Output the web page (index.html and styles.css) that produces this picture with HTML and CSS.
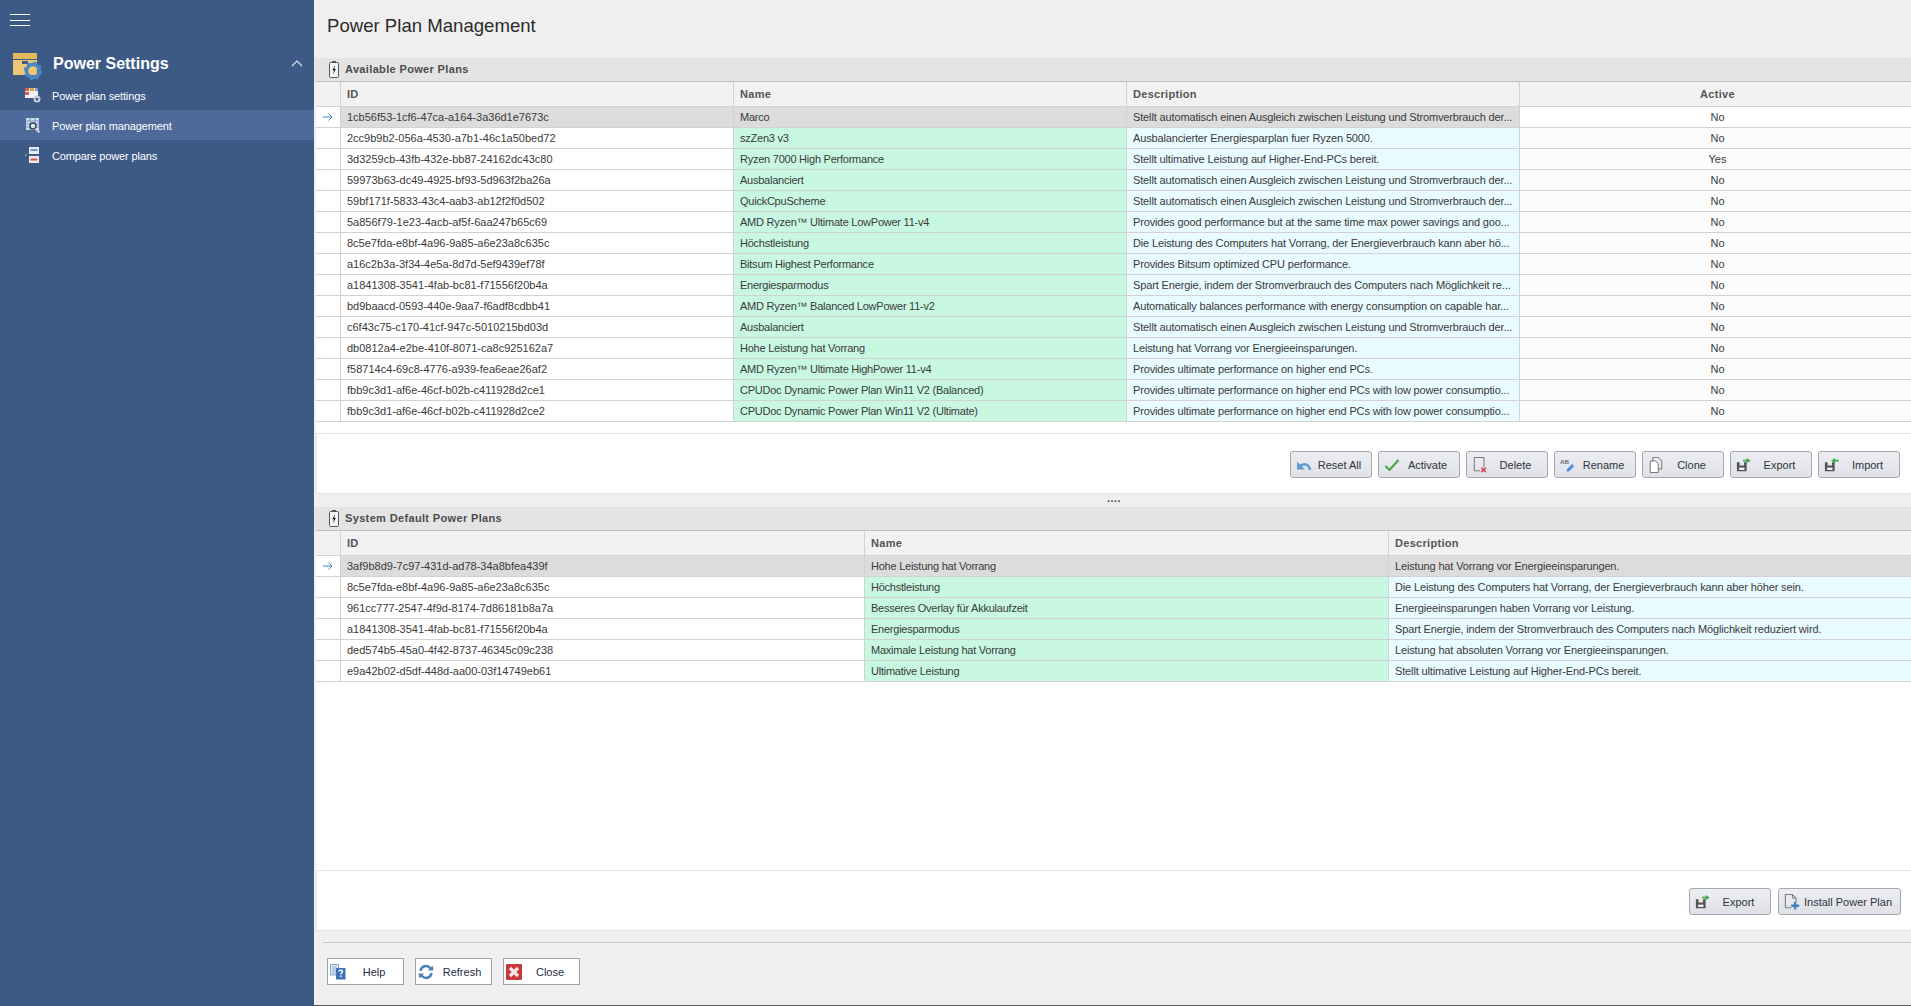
FILE: index.html
```html
<!DOCTYPE html>
<html lang="en">
<head>
<meta charset="utf-8">
<title>Power Plan Management</title>
<link rel="stylesheet" href="styles.css">
</head>
<body>
<svg class="defs" width="0" height="0" aria-hidden="true">
  <symbol id="i-battery" viewBox="0 0 10 17">
    <rect x="3" y="0" width="4" height="2" fill="#555"/>
    <rect x="0.5" y="1.5" width="9" height="15" rx="1" fill="#f4f4f4" stroke="#555"/>
    <path d="M6 4 3.4 9.2H5L4 13.6 6.8 8H5.2Z" fill="#111"/>
  </symbol>
  <symbol id="i-arrow" viewBox="0 0 10 8">
    <path d="M0 4H9M5.5 .5 9 4 5.5 7.5" fill="none" stroke="#3f86e0"/>
  </symbol>
  <symbol id="i-reset" viewBox="0 0 16 16">
    <path d="M14 13C13.500 8 9 5.500 4.500 8.500" fill="none" stroke="#5b9bd8" stroke-width="2.400"/>
    <path d="M1 4.500V12.500H9Z" fill="#5b9bd8"/>
  </symbol>
  <symbol id="i-check" viewBox="0 0 16 16">
    <path d="M1.500 9 5.500 13 14.500 3" fill="none" stroke="#4ba553" stroke-width="2.200"/>
  </symbol>
  <symbol id="i-delete" viewBox="0 0 16 18">
    <path d="M8 15.500H1.500V.5H12.500V11" fill="none" stroke="#666"/>
    <path d="M9.500 12 14.500 17M14.500 12 9.500 17" stroke="#e0405a" stroke-width="1.800"/>
  </symbol>
  <symbol id="i-clone" viewBox="0 0 16 18">
    <path d="M4.500 4.500V.5H10.500L14.500 4.500V13.500H10.500" fill="none" stroke="#666"/>
    <path d="M1.500 4.500H7.500L10.500 7.500V17.500H1.500Z" fill="#fff" stroke="#666"/>
  </symbol>
  <symbol id="i-export" viewBox="0 0 18 16">
    <path d="M1 5H4V8.500H9V5H12V15H1Z" fill="#555"/>
    <rect x="3.500" y="11" width="6" height="2.500" fill="#fff"/>
    <path d="M8 2H12V0L16.500 3 12 6V4H8Z" fill="#3ea84b"/>
  </symbol>
  <symbol id="i-import" viewBox="0 0 18 16">
    <path d="M1 5H4V8.500H9V5H12V15H1Z" fill="#555"/>
    <rect x="3.500" y="11" width="6" height="2.500" fill="#fff"/>
    <path d="M16.500 2H12.500V0L8 3 12.500 6V4H16.500Z" fill="#3ea84b"/>
  </symbol>
  <symbol id="i-install" viewBox="0 0 18 18">
    <path d="M8 15.500H1.500V.5H9.500L13.500 4.500V9" fill="none" stroke="#666"/>
    <path d="M9.500 .5V4.500H13.500" fill="none" stroke="#666"/>
    <path d="M12.500 9V17.500M8 13.200H17" stroke="#3f7fc0" stroke-width="2.600"/>
  </symbol>
  <symbol id="i-help" viewBox="0 0 16 16">
    <path d="M.5.5H8.500V11H.5Z" fill="#e6edf6" stroke="#7f9fc8"/>
    <path d="M2 3H7M2 5H7M2 7H7M2 9H7" stroke="#8aa8d0"/>
    <rect x="6" y="4" width="9.500" height="11.500" fill="#3f72b8"/>
    <path d="M8.800 7.500C9 5.800 12.500 5.800 12.500 7.500 12.500 9 10.800 8.800 10.800 10.500" fill="none" stroke="#fff" stroke-width="1.300"/>
    <rect x="10.200" y="11.500" width="1.400" height="1.500" fill="#fff"/>
  </symbol>
  <symbol id="i-refresh" viewBox="0 0 16 16">
    <path d="M2.500 7A5.500 5.500 0 0 1 12.500 4.500" fill="none" stroke="#4a80bd" stroke-width="2.400"/>
    <path d="M15.500 6.500H10L14.500 1.500Z" fill="#4a80bd"/>
    <path d="M13.500 9A5.500 5.500 0 0 1 3.500 11.500" fill="none" stroke="#4a80bd" stroke-width="2.400"/>
    <path d="M.5 9.500H6L1.500 14.500Z" fill="#4a80bd"/>
  </symbol>
  <symbol id="i-close" viewBox="0 0 14 14">
    <rect width="14" height="14" rx="1" fill="#c8383c"/>
    <path d="M3.500 3.500 10.500 10.500M10.500 3.500 3.500 10.500" stroke="#f4e8e8" stroke-width="2.800"/>
  </symbol>
  <symbol id="i-power" viewBox="0 0 29 28">
    <rect x="0" y="0" width="24" height="6" fill="#e7b95e"/>
    <rect x="0" y="7" width="24" height="15" fill="#eec675"/>
    <rect x="9" y="8" width="6" height="3" fill="#3d5a87"/>
    <circle cx="20" cy="18" r="6.500" fill="none" stroke="#4a86c5" stroke-width="3.500"/>
    <circle cx="20" cy="18" r="8" fill="none" stroke="#4a86c5" stroke-width="2.500" stroke-dasharray="3 3.300"/>
  </symbol>
  <symbol id="i-settings" viewBox="0 0 16 16">
    <rect x="0" y="1" width="13" height="10" fill="#f3f3f3"/>
    <rect x="0" y="1" width="4" height="3" fill="#d8584d"/>
    <rect x="5" y="1" width="4" height="3" fill="#e0a030"/>
    <rect x="0" y="5" width="4" height="3" fill="#d8584d"/>
    <rect x="10" y="1" width="3" height="3" fill="#7d9cc8"/>
    <circle cx="12" cy="12" r="2.500" fill="none" stroke="#c9ced6" stroke-width="2"/>
  </symbol>
  <symbol id="i-manage" viewBox="0 0 16 16">
    <rect x="1" y="1" width="13" height="12" fill="#cfdcf0"/>
    <path d="M1 4H14M1 7H14M1 10H14M5 1V13M10 1V13" stroke="#7d9cc8"/>
    <circle cx="8" cy="9" r="3" fill="#dfe7f3" stroke="#39404e" stroke-width="1.400"/>
    <path d="M10.500 11.500 14.500 15.500" stroke="#cdd6e2" stroke-width="2"/>
  </symbol>
  <symbol id="i-compare" viewBox="0 0 16 16">
    <path d="M0 6.500 2 8 0 9.500Z" fill="#7cc04a"/>
    <rect x="4" y="0" width="10" height="7" fill="#e8eef7"/>
    <rect x="5.500" y="2" width="7" height="2" fill="#6f96cf"/>
    <rect x="4" y="9" width="10" height="7" fill="#f2e8e8"/>
    <rect x="5.500" y="11.500" width="7" height="2" fill="#cf5c5c"/>
  </symbol>
</svg>

<div class="app">
  <aside class="sidebar">
    <button class="menu-btn" aria-label="Menu"><span></span><span></span><span></span></button>
    <div class="group-head">
      <svg class="group-icon"><use href="#i-power"/></svg>
      <span class="group-title">Power Settings</span>
      <svg class="chevron" viewBox="0 0 12 7"><path d="M1 6 6 1 11 6" fill="none" stroke="#dfe6f0" stroke-width="1.200"/></svg>
    </div>
    <nav class="nav">
      <a class="nav-item"><svg class="nav-icon"><use href="#i-settings"/></svg>Power plan settings</a>
      <a class="nav-item nav-item-active"><svg class="nav-icon"><use href="#i-manage"/></svg>Power plan management</a>
      <a class="nav-item"><svg class="nav-icon"><use href="#i-compare"/></svg>Compare power plans</a>
    </nav>
  </aside>

  <main class="main">
    <h1 class="page-title">Power Plan Management</h1>

    <section class="section">
      <div class="section-head"><svg class="section-icon"><use href="#i-battery"/></svg>Available Power Plans</div>
      <div class="body">
        <div class="grid grid-four">
          <div class="row row-head"><div class="cell cell-ind"></div><div class="cell">ID</div><div class="cell">Name</div><div class="cell">Description</div><div class="cell cell-center">Active</div></div>
          <div class="row row-sel"><div class="cell cell-ind"><svg class="ind-arrow"><use href="#i-arrow"/></svg></div><div class="cell">1cb56f53-1cf6-47ca-a164-3a36d1e7673c</div><div class="cell">Marco</div><div class="cell">Stellt automatisch einen Ausgleich zwischen Leistung und Stromverbrauch der...</div><div class="cell cell-active">No</div></div>
          <div class="row"><div class="cell cell-ind"></div><div class="cell">2cc9b9b2-056a-4530-a7b1-46c1a50bed72</div><div class="cell cell-name">szZen3 v3</div><div class="cell cell-desc">Ausbalancierter Energiesparplan fuer Ryzen 5000.</div><div class="cell cell-active">No</div></div>
          <div class="row"><div class="cell cell-ind"></div><div class="cell">3d3259cb-43fb-432e-bb87-24162dc43c80</div><div class="cell cell-name">Ryzen 7000 High Performance</div><div class="cell cell-desc">Stellt ultimative Leistung auf Higher-End-PCs bereit.</div><div class="cell cell-active">Yes</div></div>
          <div class="row"><div class="cell cell-ind"></div><div class="cell">59973b63-dc49-4925-bf93-5d963f2ba26a</div><div class="cell cell-name">Ausbalanciert</div><div class="cell cell-desc">Stellt automatisch einen Ausgleich zwischen Leistung und Stromverbrauch der...</div><div class="cell cell-active">No</div></div>
          <div class="row"><div class="cell cell-ind"></div><div class="cell">59bf171f-5833-43c4-aab3-ab12f2f0d502</div><div class="cell cell-name">QuickCpuScheme</div><div class="cell cell-desc">Stellt automatisch einen Ausgleich zwischen Leistung und Stromverbrauch der...</div><div class="cell cell-active">No</div></div>
          <div class="row"><div class="cell cell-ind"></div><div class="cell">5a856f79-1e23-4acb-af5f-6aa247b65c69</div><div class="cell cell-name">AMD Ryzen™ Ultimate LowPower 11-v4</div><div class="cell cell-desc">Provides good performance but at the same time max power savings and goo...</div><div class="cell cell-active">No</div></div>
          <div class="row"><div class="cell cell-ind"></div><div class="cell">8c5e7fda-e8bf-4a96-9a85-a6e23a8c635c</div><div class="cell cell-name">Höchstleistung</div><div class="cell cell-desc">Die Leistung des Computers hat Vorrang, der Energieverbrauch kann aber hö...</div><div class="cell cell-active">No</div></div>
          <div class="row"><div class="cell cell-ind"></div><div class="cell">a16c2b3a-3f34-4e5a-8d7d-5ef9439ef78f</div><div class="cell cell-name">Bitsum Highest Performance</div><div class="cell cell-desc">Provides Bitsum optimized CPU performance.</div><div class="cell cell-active">No</div></div>
          <div class="row"><div class="cell cell-ind"></div><div class="cell">a1841308-3541-4fab-bc81-f71556f20b4a</div><div class="cell cell-name">Energiesparmodus</div><div class="cell cell-desc">Spart Energie, indem der Stromverbrauch des Computers nach Möglichkeit re...</div><div class="cell cell-active">No</div></div>
          <div class="row"><div class="cell cell-ind"></div><div class="cell">bd9baacd-0593-440e-9aa7-f6adf8cdbb41</div><div class="cell cell-name">AMD Ryzen™ Balanced LowPower 11-v2</div><div class="cell cell-desc">Automatically balances performance with energy consumption on capable har...</div><div class="cell cell-active">No</div></div>
          <div class="row"><div class="cell cell-ind"></div><div class="cell">c6f43c75-c170-41cf-947c-5010215bd03d</div><div class="cell cell-name">Ausbalanciert</div><div class="cell cell-desc">Stellt automatisch einen Ausgleich zwischen Leistung und Stromverbrauch der...</div><div class="cell cell-active">No</div></div>
          <div class="row"><div class="cell cell-ind"></div><div class="cell">db0812a4-e2be-410f-8071-ca8c925162a7</div><div class="cell cell-name">Hohe Leistung hat Vorrang</div><div class="cell cell-desc">Leistung hat Vorrang vor Energieeinsparungen.</div><div class="cell cell-active">No</div></div>
          <div class="row"><div class="cell cell-ind"></div><div class="cell">f58714c4-69c8-4776-a939-fea6eae26af2</div><div class="cell cell-name">AMD Ryzen™ Ultimate HighPower 11-v4</div><div class="cell cell-desc">Provides ultimate performance on higher end PCs.</div><div class="cell cell-active">No</div></div>
          <div class="row"><div class="cell cell-ind"></div><div class="cell">fbb9c3d1-af6e-46cf-b02b-c411928d2ce1</div><div class="cell cell-name">CPUDoc Dynamic Power Plan Win11 V2 (Balanced)</div><div class="cell cell-desc">Provides ultimate performance on higher end PCs with low power consumptio...</div><div class="cell cell-active">No</div></div>
          <div class="row"><div class="cell cell-ind"></div><div class="cell">fbb9c3d1-af6e-46cf-b02b-c411928d2ce2</div><div class="cell cell-name">CPUDoc Dynamic Power Plan Win11 V2 (Ultimate)</div><div class="cell cell-desc">Provides ultimate performance on higher end PCs with low power consumptio...</div><div class="cell cell-active">No</div></div>
        </div>
        <div class="actions actions-top">
          <button class="btn"><svg class="btn-icon"><use href="#i-reset"/></svg><span>Reset All</span></button>
          <button class="btn"><svg class="btn-icon"><use href="#i-check"/></svg><span>Activate</span></button>
          <button class="btn"><svg class="btn-icon"><use href="#i-delete"/></svg><span>Delete</span></button>
          <button class="btn"><svg class="btn-icon" viewBox="0 0 18 16"><text x="0" y="6.500" class="icon-letters">AB</text><path d="M7.500 15.500 8 12.500 13.500 7 16 9.500 10.500 15Z" fill="#4f8fdc"/></svg><span>Rename</span></button>
          <button class="btn"><svg class="btn-icon"><use href="#i-clone"/></svg><span>Clone</span></button>
          <button class="btn"><svg class="btn-icon"><use href="#i-export"/></svg><span>Export</span></button>
          <button class="btn"><svg class="btn-icon"><use href="#i-import"/></svg><span>Import</span></button>
        </div>
      </div>
    </section>

    <div class="splitter">....</div>

    <section class="section section-fill">
      <div class="section-head"><svg class="section-icon"><use href="#i-battery"/></svg>System Default Power Plans</div>
      <div class="body body-fill">
        <div class="grid grid-three">
          <div class="row row-head"><div class="cell cell-ind"></div><div class="cell">ID</div><div class="cell">Name</div><div class="cell">Description</div></div>
          <div class="row row-sel"><div class="cell cell-ind"><svg class="ind-arrow"><use href="#i-arrow"/></svg></div><div class="cell">3af9b8d9-7c97-431d-ad78-34a8bfea439f</div><div class="cell">Hohe Leistung hat Vorrang</div><div class="cell">Leistung hat Vorrang vor Energieeinsparungen.</div></div>
          <div class="row"><div class="cell cell-ind"></div><div class="cell">8c5e7fda-e8bf-4a96-9a85-a6e23a8c635c</div><div class="cell cell-name">Höchstleistung</div><div class="cell cell-desc">Die Leistung des Computers hat Vorrang, der Energieverbrauch kann aber höher sein.</div></div>
          <div class="row"><div class="cell cell-ind"></div><div class="cell">961cc777-2547-4f9d-8174-7d86181b8a7a</div><div class="cell cell-name">Besseres Overlay für Akkulaufzeit</div><div class="cell cell-desc">Energieeinsparungen haben Vorrang vor Leistung.</div></div>
          <div class="row"><div class="cell cell-ind"></div><div class="cell">a1841308-3541-4fab-bc81-f71556f20b4a</div><div class="cell cell-name">Energiesparmodus</div><div class="cell cell-desc">Spart Energie, indem der Stromverbrauch des Computers nach Möglichkeit reduziert wird.</div></div>
          <div class="row"><div class="cell cell-ind"></div><div class="cell">ded574b5-45a0-4f42-8737-46345c09c238</div><div class="cell cell-name">Maximale Leistung hat Vorrang</div><div class="cell cell-desc">Leistung hat absoluten Vorrang vor Energieeinsparungen.</div></div>
          <div class="row"><div class="cell cell-ind"></div><div class="cell">e9a42b02-d5df-448d-aa00-03f14749eb61</div><div class="cell cell-name">Ultimative Leistung</div><div class="cell cell-desc">Stellt ultimative Leistung auf Higher-End-PCs bereit.</div></div>
        </div>
        <div class="actions actions-bottom">
          <button class="btn"><svg class="btn-icon"><use href="#i-export"/></svg><span>Export</span></button>
          <button class="btn btn-wide"><svg class="btn-icon"><use href="#i-install"/></svg><span>Install Power Plan</span></button>
        </div>
      </div>
    </section>

    <footer class="footer">
      <button class="foot-btn"><svg class="foot-icon"><use href="#i-help"/></svg><span>Help</span></button>
      <button class="foot-btn"><svg class="foot-icon"><use href="#i-refresh"/></svg><span>Refresh</span></button>
      <button class="foot-btn"><svg class="foot-icon"><use href="#i-close"/></svg><span>Close</span></button>
    </footer>
  </main>
</div>
</body>
</html>
```

FILE: styles.css
```css
* { box-sizing: border-box; }
html, body { margin: 0; height: 100%; overflow: hidden; }
body { font: 11px "Liberation Sans", Arial, sans-serif; color: #3a3a3a; background: #efefef; }
.defs { position: absolute; }
.icon-letters { font: 700 7px "Liberation Sans", sans-serif; fill: #666; }
.app { display: flex; height: 1006px; }

.sidebar { width: 314px; flex: none; background: #3d5a87; color: #fff; }
.menu-btn { display: flex; flex-direction: column; gap: 4.5px; width: 20px; margin: 14px 0 0 10px; padding: 0; border: 0; background: none; }
.menu-btn span { display: block; height: 1px; background: #fff; }
.group-head { display: flex; align-items: center; height: 30px; margin-top: 24px; padding: 0 11px 0 13px; }
.group-icon { width: 29px; height: 28px; flex: none; margin-top: 3px; }
.group-title { flex: 1; margin: -3px 0 0 11px; font-size: 16px; font-weight: 700; }
.chevron { width: 12px; height: 7px; margin-top: -3px; }
.nav { display: flex; flex-direction: column; }
.nav-item { display: flex; align-items: center; height: 30px; padding: 1px 0 0 25px; color: #fff; font-size: 11px; letter-spacing: -.13px; }
.nav-item-active { background: #4d6a9a; }
.nav-icon { width: 16px; height: 16px; margin: -1px 11px 0 0; flex: none; }

.main { flex: 1; min-width: 0; display: flex; flex-direction: column; height: 1006px; border-bottom: 1px solid #555; }
.page-title { height: 58px; margin: 0; padding: 14px 0 0 13px; font-size: 18.6px; line-height: 24px; font-weight: 400; color: #2c2c2c; }

.section-head { display: flex; align-items: center; height: 23px; padding: 0 0 1px 15px; background: #e4e4e4; font-weight: 700; color: #4c4c4c; letter-spacing: .35px; }
.section-icon { width: 10px; height: 17px; margin-right: 6px; flex: none; }
.body { margin-left: 2px; background: #fff; }
.grid { border-top: 1px solid #bdbdbd; }
.row { display: grid; height: 21px; border-bottom: 1px solid #d2d2d2; background: #fff; }
.grid-four .row { grid-template-columns: 25px 393px 393px 393px 1fr; }
.grid-three .row { grid-template-columns: 25px 524px 524px 1fr; }
.row .cell:nth-child(3) { letter-spacing: -.24px; }
.row .cell:nth-child(4) { letter-spacing: -.14px; }
.row-head { height: 25px; background: #f2f2f2; font-weight: 700; color: #555; }
.row-head .cell, .row-head .cell:nth-child(3), .row-head .cell:nth-child(4) { line-height: 25px; letter-spacing: .3px; }
.row-head .cell-ind { background: #f2f2f2; }
.row-sel { background: #dcdcdc; }
.cell { display: block; min-width: 0; padding: 0 2px 0 6px; line-height: 21px; white-space: nowrap; overflow: hidden; text-overflow: ellipsis; border-right: 1px solid #d2d2d2; }
.grid .cell:last-child { border-right: 0; }
.cell-ind { display: flex; align-items: center; background: #fff; padding: 0 0 0 7px; }
.cell-center { text-align: center; }
.cell-name { background: #c8f8e2; }
.cell-desc { background: #e8fbff; }
.cell-active { text-align: center; background: #fbfbfb; }
.row-sel .cell-active { background: #fff; }
.ind-arrow { width: 10px; height: 8px; }

.actions { display: flex; justify-content: flex-end; height: 61px; border: solid #e3e3e3; border-width: 1px 0 1px 1px; }
.actions-top { gap: 6px; margin-top: 11px; padding: 17px 11px 0 0; }
.actions-bottom { gap: 7px; padding: 17px 10px 0 0; }
.btn { display: flex; align-items: center; width: 82px; height: 27px; padding: 0 4px 0 5px; border: 1px solid #a5a8b0; border-radius: 3px; background: linear-gradient(#eceef2, #dfe1e7); font: inherit; color: #2f3440; }
.btn span { flex: 1; text-align: center; white-space: nowrap; }
.btn-icon { width: 16px; height: 16px; flex: none; }
.btn-wide { width: 123px; }

.splitter { height: 13px; padding-left: 3px; line-height: 8px; text-align: center; color: #444; font-size: 11px; font-weight: 700; letter-spacing: .5px; }
.section-fill { flex: 1; display: flex; flex-direction: column; min-height: 0; }
.body-fill { flex: 1; display: flex; flex-direction: column; min-height: 0; }
.body-fill .grid { flex: 1; }
.footer { display: flex; gap: 11px; height: 74px; margin-left: 9px; padding: 27px 0 0 4px; background: linear-gradient(#efefef 11px, #c9c9c9 11px, #c9c9c9 12px, #efefef 12px); }
.foot-btn { display: flex; align-items: center; width: 77px; height: 27px; padding: 0 2px; border: 1px solid #a0a0a0; background: #fff; font: inherit; color: #1f2a44; }
.foot-btn span { flex: 1; margin-left: 1px; text-align: center; }
.foot-icon { width: 16px; height: 16px; flex: none; }
```
